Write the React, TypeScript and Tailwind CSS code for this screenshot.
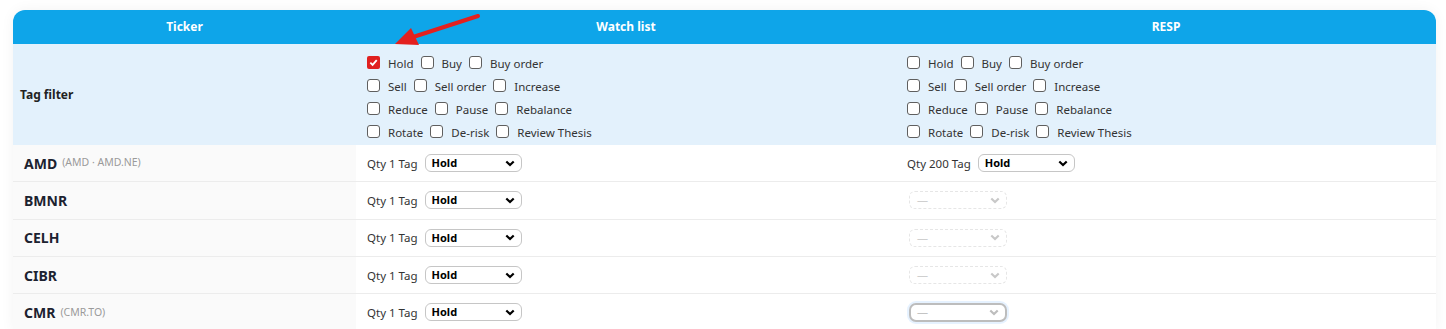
import React from "react";

const FONT = { fontFamily: '"Noto Sans", "Open Sans", sans-serif' };

const TAG_ROWS = [
  ["Hold", "Buy", "Buy order"],
  ["Sell", "Sell order", "Increase"],
  ["Reduce", "Pause", "Rebalance"],
  ["Rotate", "De-risk", "Review Thesis"],
];

const ROWS = [
  { t: "AMD", alt: "(AMD · AMD.NE)", resp: "live" },
  { t: "BMNR", alt: "", resp: "off" },
  { t: "CELH", alt: "", resp: "off" },
  { t: "CIBR", alt: "", resp: "off" },
  { t: "CMR", alt: "(CMR.TO)", resp: "focus" },
];

function Check({ on }: { on?: boolean }) {
  if (on)
    return (
      <span className="w-[13px] h-[13px] rounded-[2px] bg-[#e0201f] flex items-center justify-center shrink-0">
        <svg width="9" height="9" viewBox="0 0 10 10">
          <path d="M1.5 5.2 L4 7.6 L8.6 2.3" fill="none" stroke="#fff" strokeWidth="2" />
        </svg>
      </span>
    );
  return <span className="w-[13px] h-[13px] rounded-[3px] border border-[#5f5f5f] bg-white shrink-0" />;
}

function TagFilter({ checked }: { checked?: string }) {
  return (
    <div className="flex flex-col pt-[7px] pb-[2px]">
      {TAG_ROWS.map((row, i) => (
        <div key={i} className="h-[23px] flex items-center">
          {row.map((tag) => (
            <label key={tag} className="flex items-center mr-[7px] text-[11.5px] text-[#333]">
              <Check on={checked === tag} />
              <span className="ml-2 translate-y-[1px]">{tag}</span>
            </label>
          ))}
        </div>
      ))}
    </div>
  );
}

function Chevron({ color }: { color: string }) {
  return (
    <svg width="10" height="7" viewBox="0 0 10 7" className="shrink-0">
      <path d="M1.3 1.5 L5 5 L8.7 1.5" fill="none" stroke={color} strokeWidth="2.2" />
    </svg>
  );
}

function TagSelect() {
  return (
    <div className="w-[97px] h-[18px] rounded-[6px] border border-[#c6c6c6] bg-white flex items-center justify-between pl-[6px] pr-[6px]">
      <span className="text-[11px] font-bold text-black">Hold</span>
      <Chevron color="#000" />
    </div>
  );
}

function EmptySelect({ focus }: { focus?: boolean }) {
  if (focus)
    return (
      <div className="w-[98px] h-[19px] rounded-[7px] border-2 border-[#bdbdbd] bg-white flex items-center justify-between pl-[6px] pr-[6px] shadow-[0_0_0_2px_#e6f2ff]">
        <span className="text-[11px] text-[#c4c4c4]">—</span>
        <Chevron color="#bdbdbd" />
      </div>
    );
  return (
    <div className="w-[98px] h-[18px] rounded-[6px] border border-dashed border-[#e6e6e6] bg-white flex items-center justify-between pl-[7px] pr-[6px]">
      <span className="text-[11px] text-[#cfcfcf]">—</span>
      <Chevron color="#c8c8c8" />
    </div>
  );
}

export default function App() {
  return (
    <main className="w-full min-h-screen bg-white pt-[10px] px-[10px]" style={FONT}>
      <div className="relative ml-[3px] w-[1423px] shadow-[0_0_14px_rgba(0,0,0,0.05)] rounded-t-[12px]">
        {/* header */}
        <div className="grid grid-cols-[343px_540px_1fr] h-[34px] bg-[#0ea5e9] rounded-t-[12px] text-white text-[12px] font-bold">
          <div className="flex items-center justify-center">Ticker</div>
          <div className="flex items-center justify-center">Watch list</div>
          <div className="flex items-center justify-center">RESP</div>
        </div>

        {/* tag filter */}
        <div className="grid grid-cols-[343px_540px_1fr] bg-[#e3f1fc]">
          <div className="flex items-center pl-[7px] text-[12px] font-bold text-[#222]">Tag filter</div>
          <div className="pl-[11px]">
            <TagFilter checked="Hold" />
          </div>
          <div className="pl-[11px]">
            <TagFilter />
          </div>
        </div>

        {/* rows */}
        {ROWS.map((r) => (
          <div key={r.t} className="grid grid-cols-[343px_540px_1fr] h-[37.33px] border-b border-[#ececec]">
            <div className="bg-[#fafafa] flex items-center pl-[11px]">
              <span className="text-[14px] font-bold text-[#1c2230]">{r.t}</span>
              {r.alt && <span className="ml-[5px] text-[10.5px] text-[#9a9a9a]">{r.alt}</span>}
            </div>
            <div className="bg-white flex items-center pl-[11px] gap-[7px]">
              <span className="text-[11.5px] text-[#333]">Qty 1 Tag</span>
              <TagSelect />
            </div>
            <div className="bg-white flex items-center pl-[11px] gap-[7px]">
              {r.resp === "live" && (
                <>
                  <span className="text-[11.5px] text-[#333]">Qty 200 Tag</span>
                  <TagSelect />
                </>
              )}
              {r.resp === "off" && (
                <div className="ml-[2px]">
                  <EmptySelect />
                </div>
              )}
              {r.resp === "focus" && (
                <div className="ml-[2px]">
                  <EmptySelect focus />
                </div>
              )}
            </div>
          </div>
        ))}

        {/* annotation arrow */}
        <svg className="absolute left-[370px] top-[-10px] pointer-events-none" width="120" height="60" viewBox="0 0 120 60">
          <line x1="95" y1="16" x2="27" y2="38" stroke="#e3201f" strokeWidth="4" strokeLinecap="round" />
          <polygon points="12,44 28,28 36,45" fill="#e3201f" />
        </svg>
      </div>
    </main>
  );
}
